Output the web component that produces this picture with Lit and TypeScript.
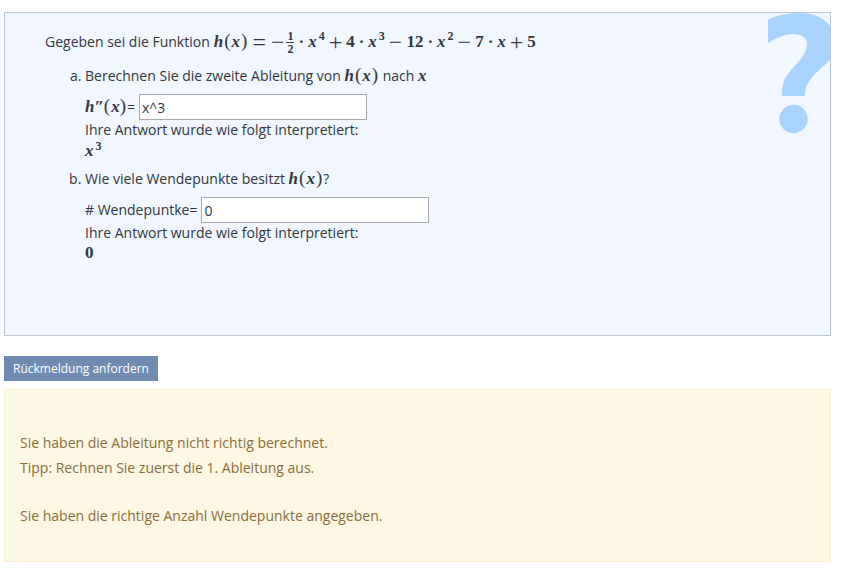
import { LitElement, html, css } from "lit";
import { customElement } from "lit/decorators.js";

const hOfX = html`<span class="math"><i>h</i><span class="paren">(</span><i>x</i><span class="paren">)</span></span>`;
const minus = html`<span class="op">−</span>`;
const plus = html`<span class="op">+</span>`;
const dot = html`<span class="dot">·</span>`;

@customElement("app-root")
export class AppRoot extends LitElement {
  static styles = css`
    :host {
      display: block;
      padding: 12px 11px 16px 4px;
      font: 14px/20px "Open Sans", "Noto Sans", sans-serif;
      color: #333740;
      background: #fff;
    }
    * {
      box-sizing: border-box;
    }
    .question {
      position: relative;
      overflow: hidden;
      padding: 17px 80px 72px 40px;
      border: 1px solid #b9c6d6;
      background: #f1f6ff;
    }
    .mark {
      position: absolute;
      top: 0;
      right: 0;
      width: 62px;
      height: 121px;
      fill: #a8d3ff;
    }
    p {
      margin: 0;
    }
    .intro {
      display: flex;
      align-items: center;
      height: 24px;
      gap: 4px;
      white-space: nowrap;
    }
    .parts {
      margin: 12px 0 0;
      padding: 0 0 0 40px;
      list-style: lower-alpha;
    }
    .parts li + li {
      margin-top: 8px;
    }
    .math {
      font: bold 17px/20px "Liberation Serif", serif;
      white-space: nowrap;
    }
    .paren {
      font-weight: normal;
      font-size: 19px;
      line-height: 16px;
      margin: 0 1px;
    }
    .row .paren {
      margin: 0 1px 0 0;
    }
    .formula {
      display: flex;
      align-items: center;
    }
    .formula sup {
      align-self: flex-start;
    }
    sup {
      font-size: 12px;
      line-height: 12px;
      vertical-align: 6px;
      margin-left: 2px;
    }
    .op {
      font-weight: normal;
      font-size: 24px;
      margin: 0 4px;
    }
    .unary {
      margin: 0 2px 0 1px;
    }
    .dot {
      margin: 0 4px;
    }
    .frac {
      display: inline-flex;
      flex-direction: column;
      text-align: center;
      font-size: 12px;
      line-height: 12px;
      width: 8px;
    }
    .frac span + span {
      border-top: 1px solid #333740;
    }
    .row {
      display: flex;
      align-items: center;
      height: 26px;
      margin-top: 8px;
    }
    .row input {
      width: 228px;
      height: 26px;
      margin-left: 4px;
      padding: 0 2px;
      border: 1px solid #a5a9b3;
      border-radius: 0;
      background: #fff;
      color: inherit;
      font: inherit;
    }
    button {
      display: block;
      height: 25px;
      margin: 20px 0 8px;
      padding: 0 9px;
      border: 0;
      background: #6f8bb2;
      color: #fff;
      font: 12px/24px "Open Sans", "Noto Sans", sans-serif;
    }
    .feedback {
      padding: 40px 15px 33px;
      border: 1px solid #faf0d2;
      background: #fcf8e3;
      color: #8a6d3b;
      line-height: 25px;
    }
    .feedback p + p {
      margin-top: 23px;
    }
  `;

  render() {
    return html`
      <section class="question">
        <svg class="mark" viewBox="0 0 62 121" aria-hidden="true">
          <path d="M0 7C9 2 20 0 32 0C46 0 56 5 63 14V46C55 54 47 60 42 67C38 72 37 77 37 83H14C14 73 15 67 20 61C27 51 39 43 39 31C39 25 34 21 26 21C17 21 8 25 0 30Z" />
          <circle cx="25.5" cy="106" r="14.2" />
        </svg>
        <div class="intro">
          <span>Gegeben sei die Funktion</span>
          <span class="math formula">
            ${hOfX}<span class="op">=</span><span class="op unary">−</span>
            <span class="frac"><span>1</span><span>2</span></span>
            ${dot}<i>x</i><sup>4</sup>${plus}4${dot}<i>x</i><sup>3</sup>${minus}12${dot}<i>x</i><sup>2</sup>${minus}7${dot}<i>x</i>${plus}5
          </span>
        </div>
        <ol class="parts">
          <li>
            <p>Berechnen Sie die zweite Ableitung von ${hOfX} nach <i class="math"><i>x</i></i></p>
            <div class="row">
              <label for="derivative"><span class="math"><i>h</i>″<span class="paren">(</span><i>x</i><span class="paren">)</span></span>=</label>
              <input id="derivative" type="text" value="x^3" />
            </div>
            <p>Ihre Antwort wurde wie folgt interpretiert:</p>
            <p class="math"><i>x</i><sup>3</sup></p>
          </li>
          <li>
            <p>Wie viele Wendepunkte besitzt ${hOfX}?</p>
            <div class="row">
              <label for="inflections"># Wendepuntke=</label>
              <input id="inflections" type="text" value="0" />
            </div>
            <p>Ihre Antwort wurde wie folgt interpretiert:</p>
            <p class="math">0</p>
          </li>
        </ol>
      </section>
      <button type="button">Rückmeldung anfordern</button>
      <section class="feedback">
        <p>Sie haben die Ableitung nicht richtig berechnet.<br />Tipp: Rechnen Sie zuerst die 1. Ableitung aus.</p>
        <p>Sie haben die richtige Anzahl Wendepunkte angegeben.</p>
      </section>
    `;
  }
}
